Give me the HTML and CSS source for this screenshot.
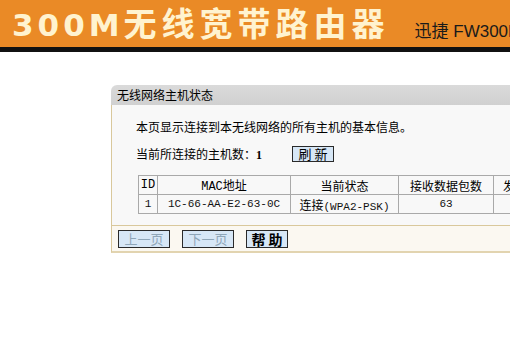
FILE: index.html
```html
<!DOCTYPE html>
<html lang="zh-CN">
<head>
    <meta charset="UTF-8">
    <meta name="viewport" content="width=device-width, initial-scale=1.0">
    <title>无线网络主机状态</title>
    <link rel="stylesheet" href="styles.css">
</head>
<body>
    <div class="banner">
        <span class="brand"><span class="brand-num">300M</span>无线宽带路由器</span>
        <span class="model">迅捷 FW300R</span>
    </div>

    <div class="panel">
        <div class="panel-title">无线网络主机状态</div>
        <div class="panel-body">
            <p class="info">本页显示连接到本无线网络的所有主机的基本信息。</p>
            <div class="count-row">
                <span>当前所连接的主机数：<b class="num">1</b></span>
                <button class="btn">刷&nbsp;新</button>
            </div>

            <table class="hosts">
                <tr>
                    <th class="col-id">ID</th>
                    <th class="col-mac">MAC地址</th>
                    <th class="col-state">当前状态</th>
                    <th class="col-rx">接收数据包数</th>
                    <th class="col-tx">发送数据包数</th>
                </tr>
                <tr>
                    <td class="mono">1</td>
                    <td class="mono">1C-66-AA-E2-63-0C</td>
                    <td>连接<span class="mono">(WPA2-PSK)</span></td>
                    <td class="mono">63</td>
                    <td class="mono"></td>
                </tr>
            </table>
        </div>
        <div class="panel-foot">
            <button class="btn btn-page" disabled>上一页</button>
            <button class="btn btn-page" disabled>下一页</button>
            <button class="btn btn-help">帮&nbsp;助</button>
        </div>
    </div>
</body>
</html>
```

FILE: styles.css
```css
body {
    margin: 0;
    background-color: #fff;
    font-family: "Noto Sans CJK SC", sans-serif;
    font-size: 12px;
    color: #000;
    overflow: hidden;
}

.banner {
    height: 47px;
    background-color: #ea8a26;
    border-bottom: 5px solid #111;
    display: flex;
    align-items: center;
    padding-left: 12px;
    white-space: nowrap;
}

.brand {
    font-size: 33px;
    font-weight: bold;
    color: #fff3cf;
    letter-spacing: 5px;
    line-height: 1;
}

.brand-num {
    font-family: "DejaVu Sans", sans-serif;
    font-size: 31px;
    letter-spacing: 4px;
}

.model {
    margin-left: 25px;
    margin-top: 12px;
    font-size: 17px;
    color: #1a1a1a;
    font-family: "Liberation Sans", "Noto Sans CJK SC", sans-serif;
}

.panel {
    margin: 33px 0 0 111px;
    width: 620px;
}

.panel-title {
    height: 20px;
    line-height: 20px;
    padding-left: 6px;
    background: linear-gradient(#dadada, #d0d0d0);
    border-top-left-radius: 6px;
}

.panel-body {
    background-color: #f8f8f8;
    border-left: 1px solid #d9c89c;
    padding: 12px 0 11px 24px;
}

.info {
    margin: 0;
    height: 20px;
    line-height: 20px;
}

.count-row {
    margin-top: 9px;
    display: flex;
    align-items: center;
    height: 16px;
}

.num {
    font-family: "Liberation Serif", serif;
    font-size: 12px;
}

.btn {
    font-family: "Noto Sans CJK SC", sans-serif;
    font-size: 13px;
    line-height: 14px;
    padding: 0;
    background-color: #d7e7f6;
    border: 1px solid #2a2a2a;
    color: #000;
}

.count-row .btn {
    margin-left: 30px;
    width: 42px;
    height: 16px;
}

.hosts {
    margin: 13px 0 0 2px;
    border-collapse: collapse;
    table-layout: fixed;
}

.hosts th,
.hosts td {
    border: 1px solid #a9a9a9;
    height: 18px;
    padding: 0;
    text-align: center;
    font-weight: normal;
    white-space: nowrap;
}

.hosts th {
    font-size: 12px;
}

.col-id { width: 18px; }
.col-mac { width: 132px; }
.col-state { width: 107px; }
.col-rx { width: 94px; }
.col-tx { width: 90px; }

.mono {
    font-family: "Liberation Mono", monospace;
    font-size: 11px;
    color: #111;
}

.hosts th.col-id,
.hosts th.col-mac {
    font-family: "Liberation Mono", "Noto Sans CJK SC", monospace;
    font-size: 12px;
}

.panel-foot {
    background-color: #fbf8f1;
    border-left: 1px solid #d9c89c;
    border-top: 1px solid #d9c89c;
    border-bottom: 2px solid #e2d4b0;
    padding: 4px 0 3px 6px;
    display: flex;
    gap: 12px;
}

.btn-page {
    width: 52px;
    height: 18px;
    color: #8fa6b8;
}

.btn-help {
    width: 42px;
    height: 18px;
    font-weight: bold;
    font-size: 14px;
}
```
